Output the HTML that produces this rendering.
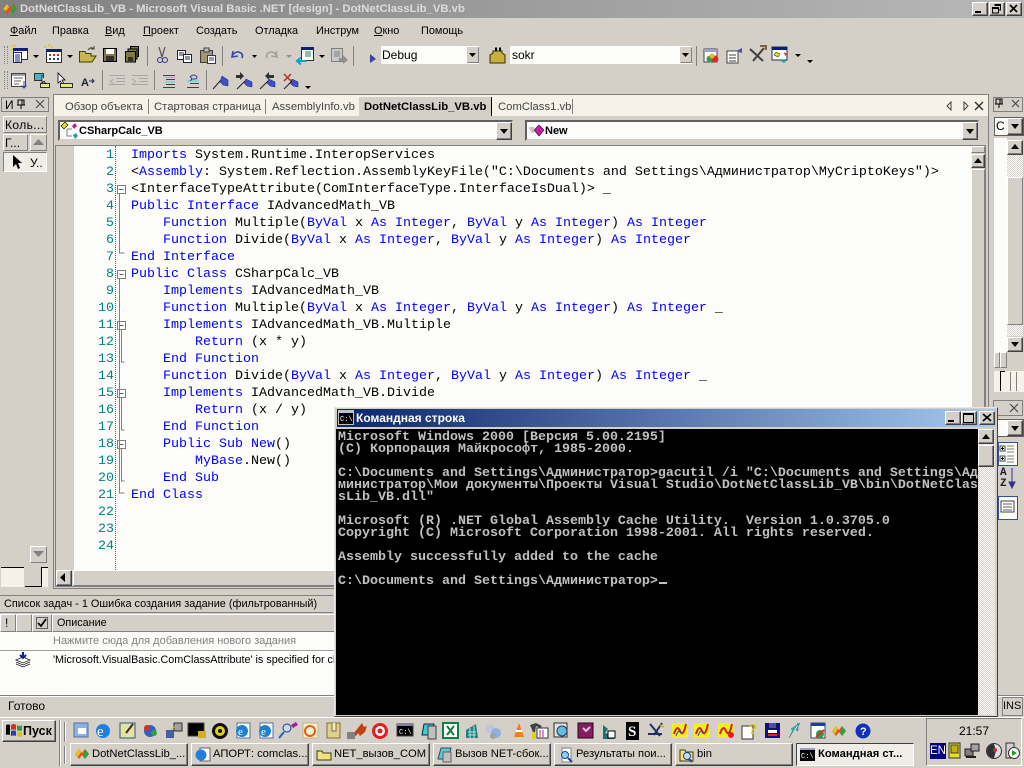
<!DOCTYPE html>
<html><head><meta charset="utf-8"><style>
html,body{margin:0;padding:0}
body{width:1024px;height:768px;overflow:hidden;position:relative;background:#d4d0c8;font:11.5px "Liberation Sans","Noto Sans CJK SC",sans-serif;color:#000}
div,span.a,svg{position:absolute}
.t{white-space:nowrap;line-height:14px}
.b{background:#d4d0c8;border:1px solid;border-color:#fff #404040 #404040 #fff;box-sizing:border-box;box-shadow:inset -1px -1px 0 #808080}
.f{background:#d4d0c8;border:1px solid;border-color:#808080 #fff #fff #808080;box-sizing:border-box}
.m{white-space:pre;font:13.33px/17px "Liberation Mono",monospace;left:131px;color:#000}
.m b{font-weight:normal;color:#00f}
.n{font:13.33px/17px "Liberation Mono",monospace;color:#008080;left:90px;width:24px;text-align:right}
.c{white-space:pre;font:bold 13.33px/12px "Liberation Mono",monospace;color:#c0c0c0;left:2px}
.tb{top:743px;height:23px;width:118px;background:#d4d0c8;border:1px solid;border-color:#fff #404040 #404040 #fff;box-sizing:border-box;box-shadow:inset -1px -1px 0 #808080;line-height:20px;padding-left:21px;font-size:11.2px;white-space:nowrap;overflow:hidden}
.mn{top:24px;line-height:14px;font-size:10.9px;white-space:nowrap}
.tab{top:100px;line-height:14px;color:#444;white-space:nowrap;font-size:11.3px}
</style></head><body>

<!-- title bar -->
<div style="left:0;top:0;width:1024px;height:18px;background:linear-gradient(90deg,#808080,#b8b8b8)"></div>
<svg style="left:2px;top:2px" width="16" height="14"><path d="M1 7L5 2L8 6L11 2L15 7L11 12L8 8L5 12Z" fill="#e05020"/><path d="M1 7L5 2L7 5L4 9Z" fill="#e8c020"/><path d="M11 2L15 7L11 12L9 9Z" fill="#30a040"/></svg>
<div class="t" style="left:20px;top:2px;color:#dcdcdc;font:bold 11.3px/14px 'Liberation Sans',sans-serif">DotNetClassLib_VB - Microsoft Visual Basic .NET [design] - DotNetClassLib_VB.vb</div>
<div class="b" style="left:972px;top:2px;width:16px;height:14px"></div><div style="left:975px;top:11px;width:6px;height:2px;background:#000"></div>
<div class="b" style="left:989px;top:2px;width:16px;height:14px"></div><svg style="left:991px;top:3px" width="12" height="12"><path d="M3.5 1.5H9.5V7H7.5M1.5 4.5H7.5V10H1.5ZM1.5 5.5H7.5M3.5 2.5H9.5" fill="none" stroke="#000"/></svg>
<div class="b" style="left:1006px;top:2px;width:16px;height:14px"></div><svg style="left:1008px;top:4px" width="12" height="10"><path d="M2 1L9 8M9 1L2 8" stroke="#000" stroke-width="1.7"/></svg>

<!-- menu -->
<div class="mn" style="left:10px"><u>Ф</u>айл</div>
<div class="mn" style="left:52px">Правка</div>
<div class="mn" style="left:105px"><u>В</u>ид</div>
<div class="mn" style="left:143px"><u>П</u>роект</div>
<div class="mn" style="left:196px">Создать</div>
<div class="mn" style="left:255px">Отладка</div>
<div class="mn" style="left:316px">Инструм</div>
<div class="mn" style="left:374px"><u>О</u>кно</div>
<div class="mn" style="left:421px">Помощь</div>

<!-- toolbar 1 -->
<div style="left:4px;top:46px;width:2px;height:18px;border-left:1px dotted #808080;border-right:1px dotted #808080"></div>
<svg style="left:0;top:42px" width="830" height="26">
<rect x="13.500" y="6.500" width="14" height="11" fill="#fff" stroke="#303030"/><rect x="13" y="6" width="15" height="3" fill="#102070"/>
<rect x="13.500" y="10.500" width="8" height="10" fill="#fff" stroke="#102080"/><path d="M15 13h5M15 15h5M15 17h5M15 19h5" stroke="#102080"/>
<path d="M11 3l2 2M15 2v3M11 8l2-1" stroke="#e0c000"/>
<rect x="46.500" y="7.500" width="15" height="13" fill="#fff" stroke="#303030"/><rect x="46" y="7" width="16" height="3" fill="#102070"/>
<path d="M49 13h2M53 13h2M57 13h2" stroke="#c03030" stroke-width="2"/><path d="M49 17h2M53 17h2M57 17h2" stroke="#2040a0" stroke-width="2"/>
<path d="M44 4l2 2M49 2v3M53 4l-2 2" stroke="#e0c000"/>
<path d="M33 13h6l-3 3zM67 13h6l-3 3z" fill="#000"/>
<path d="M79.500 20V9.500H85l1 2H91V14H96L92 20Z" fill="#c8b850" stroke="#404000"/><path d="M88 8q3-4 6-1M94 4v3h-3" stroke="#404040" fill="none"/>
<rect x="103.500" y="6.500" width="13" height="13" fill="#807a40" stroke="#000"/><rect x="106" y="7" width="8" height="5" fill="#fff"/><rect x="106" y="14" width="8" height="5" fill="#303030"/>
<rect x="130.500" y="4.500" width="8" height="10" fill="#807a40" stroke="#000"/><rect x="128" y="7" width="9" height="10" fill="#807a40" stroke="#000"/><rect x="125.500" y="9.500" width="10" height="10.500" fill="#807a40" stroke="#000"/><rect x="128" y="15" width="5" height="4" fill="#303030"/>
<path d="M159 5l3 10M165 5l-3 10" stroke="#505050" stroke-width="1.200" fill="none"/><circle cx="160" cy="18" r="2.500" fill="none" stroke="#303090"/><circle cx="165" cy="18" r="2.500" fill="none" stroke="#303090"/>
<path d="M177.500 8.500h8v9h-8z" fill="#fff" stroke="#202040"/><path d="M179 11h5M179 13h5" stroke="#202040"/><path d="M183.500 12.500h8v8h-8z" fill="#fff" stroke="#202040"/><path d="M185 15h5M185 17h5" stroke="#202040"/>
<rect x="200.500" y="8.500" width="12" height="12" fill="#a09870" stroke="#404040"/><rect x="204" y="6" width="5" height="4" fill="#c0c0c0" stroke="#404040"/><rect x="207.500" y="13.500" width="8" height="8" fill="#fff" stroke="#303080"/><path d="M209 16h5M209 18h5" stroke="#303080"/>
<path d="M233 9l-1 6 6-1M232 14q5-7 10-2q1 2 0 4" fill="none" stroke="#3a48a8" stroke-width="1.600"/><path d="M252 13h5l-2.500 3z" fill="#000"/>
<path d="M276 9l1 6-6-1M277 14q-5-7-10-2q-1 2 0 4" fill="none" stroke="#a0a0a0" stroke-width="1.600"/><path d="M286 13h6l-3 3z" fill="#909090"/>
<rect x="301.500" y="5.500" width="12" height="13" fill="#fff" stroke="#303030"/><rect x="301" y="5" width="13" height="3" fill="#102070"/><path d="M305 10h6M305 12h6M305 14h6" stroke="#208040"/><path d="M298 19h8M301 15.500l-4 3.500 4 3.500" stroke="#00a8c8" stroke-width="2" fill="none"/>
<path d="M319 13h6l-3 3z" fill="#000"/>
<rect x="331.500" y="6.500" width="11" height="13" fill="#c8c8c8" stroke="#808080"/><path d="M334 10h6M334 12h6M334 14h6" stroke="#808080"/><path d="M339 16h4v-3l5 5-5 4v-3h-4z" fill="#909090"/>
<path d="M370 12l6 5-6 4z" fill="#4040a0"/>
<path d="M490 21V13L493 11V9h9v2l3 2v8z" fill="#c8b040" stroke="#303000"/><path d="M495 7h2M499 7h2" stroke="#000" stroke-width="3"/>
<rect x="704" y="7" width="13" height="13" fill="#fff" stroke="#404060"/><rect x="704" y="7" width="13" height="3" fill="#a0a0c0"/><circle cx="710" cy="17" r="3.5" fill="#30a040"/><circle cx="715" cy="17" r="3.5" fill="#d03030"/><circle cx="712" cy="14" r="2.5" fill="#e0c020"/>
<rect x="727" y="9" width="11" height="12" fill="#fff" stroke="#404040"/><path d="M729 13h7M729 16h7M729 19h7" stroke="#404040"/><path d="M736 9l6-3v5z" fill="#5050a0"/>
<path d="M750 7l13 12M764 6l-11 13" stroke="#404040" stroke-width="2"/><path d="M760 4h6v4" stroke="#806040" stroke-width="2" fill="none"/>
<rect x="772" y="5" width="15" height="13" fill="#fff" stroke="#303030"/><rect x="772" y="5" width="15" height="3" fill="#002080"/><path d="M776 10l4 2-2 3-4-2z" fill="#e0e020" stroke="#000" stroke-width=".5"/><path d="M784 10l3 2-2 2z" fill="#c02080"/><path d="M783 17l3 2-2 2-3-2z" fill="#20a0b0"/>
<path d="M795 12h6l-3 3zM807 18h6l-3 3z" fill="#000"/>
</svg>
<div style="left:147px;top:46px;width:1px;height:20px;background:#808080"></div>
<div style="left:222px;top:46px;width:1px;height:20px;background:#808080"></div>
<div style="left:353px;top:46px;width:1px;height:20px;background:#808080"></div>
<div style="left:696px;top:46px;width:1px;height:20px;background:#808080"></div>
<div style="left:381px;top:46px;width:98px;height:18px;background:#fcfcfa"></div>
<div class="t" style="left:382px;top:48px;font-size:12px">Debug</div>
<div class="b" style="left:467px;top:47px;width:12px;height:16px;border-color:#d4d0c8 #808080 #808080 #d4d0c8;box-shadow:none"></div>
<svg style="left:469px;top:53px" width="8" height="5"><path d="M0 0h7L3.500 4z"/></svg>
<div style="left:510px;top:46px;width:182px;height:18px;background:#fcfcfa"></div>
<div class="t" style="left:512px;top:48px;font-size:12px">sokr</div>
<div class="b" style="left:680px;top:47px;width:12px;height:16px;border-color:#d4d0c8 #808080 #808080 #d4d0c8;box-shadow:none"></div>
<svg style="left:682px;top:53px" width="8" height="5"><path d="M0 0h7L3.500 4z"/></svg>

<!-- toolbar 2 -->
<div style="left:4px;top:71px;width:2px;height:18px;border-left:1px dotted #808080;border-right:1px dotted #808080"></div>
<svg style="left:0;top:66px" width="320" height="28">
<rect x="11.500" y="7.500" width="14" height="13" fill="#fff" stroke="#404040"/><rect x="12" y="8" width="13" height="2" fill="#a0a0a0"/><path d="M14 12h9M14 15h7M14 18h5" stroke="#606060"/><path d="M24 15v7m-2.500-2.500l2.500 2.500 2.500-2.500" stroke="#3040b0" fill="none"/>
<rect x="34.500" y="7.500" width="9" height="7" fill="#40b8c8" stroke="#303030"/><rect x="40.500" y="17.500" width="9" height="4" fill="#e8e880" stroke="#303030"/><path d="M42 9v8l2-2 2 3" fill="#fff" stroke="#000" stroke-width=".8"/>
<path d="M58 7v10l2.500-2 2 4 1.500-1-2-4h3z" fill="#fff" stroke="#000" stroke-width=".8"/><rect x="60.500" y="17.500" width="12" height="4" fill="#e8e880" stroke="#303030"/>
<text x="81" y="20" font-family="Liberation Sans" font-size="11" font-weight="bold" fill="#202040">A</text><path d="M89 15h5m-2-2l2 2-2 2" stroke="#202060" fill="none"/>
<path d="M109 9.500h16M116 12.500h9M116 15.500h9M109 18.500h16" stroke="#a8a8a8"/><path d="M114 13l-4 2.500 4 2.500" stroke="#a8a8a8" fill="none"/>
<path d="M132 9.500h16M139 12.500h9M139 15.500h9M132 18.500h16" stroke="#a8a8a8"/><path d="M132 13l4 2.500-4 2.500" stroke="#a8a8a8" fill="none"/>
<path d="M163 9.500h12M163 21.500h12M166 13.500h9M166 18.500h9" stroke="#404040"/><path d="M165 11.500h10M165 16h10" stroke="#40d8d8"/>
<path d="M187 21.500h12M190 17.500h9" stroke="#404040"/><path d="M187 15h12" stroke="#40d8d8"/><path d="M190 11q4-4 7 0q0 2-2 2h-4m-1-3l2 3-2 2" stroke="#3040a0" fill="none"/>
<g fill="#4050c8" stroke="#102060" stroke-width=".5"><path d="M222 10l6 4v6l-5-1-3-3z"/><path d="M246 13l6 3v5l-5-1-3-3z"/><path d="M269 13l6 3v5l-5-1-3-3z"/><path d="M292 13l6 3v5l-5-1-3-3z"/></g>
<path d="M213 23l8-9M237 23l8-8M260 23l8-8M284 23l8-8" stroke="#202020"/>
<path d="M236 9h4V6l4 4-4 4v-2h-4zM265 10l4-4v3h5v3h-5v2z" fill="#303030"/><path d="M284 8l7 7M291 8l-7 7" stroke="#b03030" stroke-width="1.500"/>
<path d="M305 20h6l-3 3z" fill="#000"/>
</svg>
<div style="left:102px;top:70px;width:1px;height:20px;background:#808080"></div>
<div style="left:154px;top:70px;width:1px;height:20px;background:#808080"></div>
<div style="left:206px;top:70px;width:1px;height:20px;background:#808080"></div>

<!-- left panel -->
<div class="b" style="left:1px;top:97px;width:48px;height:15px;box-shadow:none;border-color:#808080"></div>
<div class="t" style="left:5px;top:98px;font-size:12px">И</div>
<svg style="left:16px;top:99px" width="30" height="11"><path d="M2 1h6v5H2zM1 6h8M5 6v4M6 1v5" stroke="#000" fill="none"/><path d="M20 1l8 8M28 1l-8 8" stroke="#404040"/></svg>
<div class="b" style="left:3px;top:116px;width:44px;height:17px;box-shadow:none;border-color:#fff #808080 #808080 #fff"></div>
<div class="t" style="left:5px;top:118px;font-size:12px;letter-spacing:.4px">Коль...</div>
<div class="b" style="left:3px;top:134px;width:25px;height:17px;box-shadow:none;border-color:#fff #808080 #808080 #fff"></div>
<div class="t" style="left:5px;top:136px;font-size:12px">Г...</div>
<div class="b" style="left:30px;top:134px;width:17px;height:17px;box-shadow:none;border-color:#fff #808080 #808080 #fff"></div>
<svg style="left:33px;top:139px" width="12" height="7"><path d="M5.500 0L11 6H0z" fill="#808080"/></svg>
<div style="left:3px;top:152px;width:44px;height:20px;background:#efedE6;border:1px solid;border-color:#808080 #fff #fff #808080;box-sizing:border-box"></div>
<svg style="left:12px;top:154px" width="12" height="16"><path d="M1 1v12l3-3 2 5 2-1-2-5h4z"/></svg>
<div class="t" style="left:30px;top:156px;font-size:12px">У..</div>
<div class="b" style="left:30px;top:546px;width:17px;height:17px;box-shadow:none;border-color:#fff #808080 #808080 #fff"></div>
<svg style="left:33px;top:551px" width="12" height="7"><path d="M0 0h11L5.500 6z" fill="#808080"/></svg>
<div style="left:1px;top:567px;width:23px;height:20px;background:#f4f0ea;border-top:1px solid #000;box-sizing:border-box"></div>
<div style="left:25px;top:567px;width:16px;height:20px;border-left:0;border-bottom:1px solid #000;box-sizing:border-box"></div>
<div style="left:41px;top:567px;width:7px;height:20px;background:#f4f0ea;border-top:1px solid #000;border-left:1px solid #000;box-sizing:border-box"></div>

<!-- document area -->
<div style="left:53px;top:94px;width:936px;height:495px;background:#d4d0c8;border:1px solid #808080;box-sizing:border-box"></div>
<div style="left:54px;top:95px;width:934px;height:21px;background:#f6f2ea"></div>
<div class="tab" style="left:65px">Обзор объекта</div>
<div style="left:148px;top:99px;width:1px;height:15px;background:#808080"></div>
<div class="tab" style="left:154px">Стартовая страница</div>
<div style="left:265px;top:99px;width:1px;height:15px;background:#808080"></div>
<div class="tab" style="left:272px">AssemblyInfo.vb</div>
<div style="left:359px;top:97px;width:133px;height:19px;background:#d4d0c8;border-right:1px solid #000;box-sizing:border-box"></div>
<div class="tab" style="left:364px;color:#000;font-weight:bold">DotNetClassLib_VB.vb</div>
<div class="tab" style="left:498px">ComClass1.vb</div>
<div style="left:572px;top:99px;width:1px;height:15px;background:#808080"></div>
<svg style="left:944px;top:100px" width="40" height="13"><path d="M7 2L3 6l4 4zM20 2l4 4-4 4z" fill="none" stroke="#404040"/><path d="M31 2l8 8M39 2l-8 8" stroke="#303030" stroke-width="1.400"/></svg>

<!-- combos -->
<div style="left:58px;top:120px;width:455px;height:21px;background:#fcfcfa;border:2px solid;border-color:#606060 #d4d0c8 #d4d0c8 #606060;box-sizing:border-box"></div>
<svg style="left:60px;top:121px" width="20" height="20"><path d="M1 5l4-4 3 3-4 4z" fill="#e8e010" stroke="#000" stroke-width=".6"/><path d="M12 5l3-3 2 3-3 3z" fill="#c02080"/><path d="M13 14l3-2 2 3-3 3z" fill="#20a0b0"/><path d="M7 8v7h5M7 8h5" stroke="#808080" fill="none"/></svg>
<div class="t" style="left:79px;top:124px;font:bold 11px/14px 'Liberation Sans',sans-serif">CSharpCalc_VB</div>
<div class="b" style="left:496px;top:122px;width:16px;height:18px"></div>
<svg style="left:500px;top:129px" width="9" height="6"><path d="M0 0h8L4 5z"/></svg>
<div style="left:525px;top:120px;width:454px;height:21px;background:#fcfcfa;border:2px solid;border-color:#606060 #d4d0c8 #d4d0c8 #606060;box-sizing:border-box"></div>
<svg style="left:528px;top:123px" width="18" height="16"><path d="M1 5h5M2 7h4M3 9h3" stroke="#909090"/><path d="M11 2l5 5-5 6-5-6z" fill="#c020a0" stroke="#400040" stroke-width=".6"/></svg>
<div class="t" style="left:545px;top:124px;font:bold 11px/14px 'Liberation Sans',sans-serif">New</div>
<div class="b" style="left:962px;top:122px;width:16px;height:18px"></div>
<svg style="left:966px;top:129px" width="9" height="6"><path d="M0 0h8L4 5z"/></svg>

<!-- editor -->
<div style="left:55px;top:145px;width:931px;height:442px;border:1px solid #808080;box-sizing:border-box;background:#d4d0c8"></div>
<div style="left:74px;top:146px;width:897px;height:424px;background:#fcfcfa"></div>
<div style="left:115px;top:146px;width:0;height:424px;border-left:1px dotted #008080"></div>
<div class="n" style="top:147px">1</div><div class="n" style="top:164px">2</div><div class="n" style="top:181px">3</div><div class="n" style="top:198px">4</div><div class="n" style="top:215px">5</div><div class="n" style="top:232px">6</div><div class="n" style="top:249px">7</div><div class="n" style="top:266px">8</div><div class="n" style="top:283px">9</div><div class="n" style="top:300px">10</div><div class="n" style="top:317px">11</div><div class="n" style="top:334px">12</div><div class="n" style="top:351px">13</div><div class="n" style="top:368px">14</div><div class="n" style="top:385px">15</div><div class="n" style="top:402px">16</div><div class="n" style="top:419px">17</div><div class="n" style="top:436px">18</div><div class="n" style="top:453px">19</div><div class="n" style="top:470px">20</div><div class="n" style="top:487px">21</div><div class="n" style="top:504px">22</div><div class="n" style="top:521px">23</div><div class="n" style="top:538px">24</div>
<svg style="left:116px;top:147px" width="14" height="360"><g fill="#fff" stroke="#808080"><rect x="1.500" y="38.500" width="8" height="8"/><rect x="1.500" y="123.500" width="8" height="8"/><rect x="1.500" y="174.500" width="8" height="8"/><rect x="1.500" y="242.500" width="8" height="8"/><rect x="1.500" y="293.500" width="8" height="8"/></g>
<path d="M3.500 47v59h5M3.500 132V346h5M5.500 183v32h3M5.500 251v32h3M5.500 302v32h3M3.500 42.500h-1" fill="none" stroke="#808080" stroke-width="1"/><path d="M3.500 42.500h4M3.500 127.500h4M3.500 178.500h4M3.500 246.500h4M3.500 297.500h4" stroke="#606060"/></svg>
<div class="m" style="top:147px"><b>Imports</b> System.Runtime.InteropServices</div>
<div class="m" style="top:164px">&lt;<b>Assembly</b>: System.Reflection.AssemblyKeyFile("C:\Documents and Settings\Администратор\MyCriptoKeys")&gt;</div>
<div class="m" style="top:181px">&lt;InterfaceTypeAttribute(ComInterfaceType.InterfaceIsDual)&gt; _</div>
<div class="m" style="top:198px"><b>Public Interface</b> IAdvancedMath_VB</div>
<div class="m" style="top:215px">    <b>Function</b> Multiple(<b>ByVal</b> x <b>As Integer</b>, <b>ByVal</b> y <b>As Integer</b>) <b>As Integer</b></div>
<div class="m" style="top:232px">    <b>Function</b> Divide(<b>ByVal</b> x <b>As Integer</b>, <b>ByVal</b> y <b>As Integer</b>) <b>As Integer</b></div>
<div class="m" style="top:249px"><b>End Interface</b></div>
<div class="m" style="top:266px"><b>Public Class</b> CSharpCalc_VB</div>
<div class="m" style="top:283px">    <b>Implements</b> IAdvancedMath_VB</div>
<div class="m" style="top:300px">    <b>Function</b> Multiple(<b>ByVal</b> x <b>As Integer</b>, <b>ByVal</b> y <b>As Integer</b>) <b>As Integer</b> _</div>
<div class="m" style="top:317px">    <b>Implements</b> IAdvancedMath_VB.Multiple</div>
<div class="m" style="top:334px">        <b>Return</b> (x * y)</div>
<div class="m" style="top:351px">    <b>End Function</b></div>
<div class="m" style="top:368px">    <b>Function</b> Divide(<b>ByVal</b> x <b>As Integer</b>, <b>ByVal</b> y <b>As Integer</b>) <b>As Integer</b> _</div>
<div class="m" style="top:385px">    <b>Implements</b> IAdvancedMath_VB.Divide</div>
<div class="m" style="top:402px">        <b>Return</b> (x / y)</div>
<div class="m" style="top:419px">    <b>End Function</b></div>
<div class="m" style="top:436px">    <b>Public Sub New</b>()</div>
<div class="m" style="top:453px">        <b>MyBase</b>.New()</div>
<div class="m" style="top:470px">    <b>End Sub</b></div>
<div class="m" style="top:487px"><b>End Class</b></div>

<!-- editor scrollbars -->
<div class="b" style="left:971px;top:146px;width:14px;height:7px;box-shadow:none;border-color:#fff #808080 #808080 #fff"></div>
<div class="b" style="left:971px;top:154px;width:14px;height:14px"></div>
<svg style="left:974px;top:158px" width="9" height="6"><path d="M4 0l4 5H0z"/></svg>
<div class="b" style="left:971px;top:169px;width:14px;height:240px;box-shadow:none;border-color:#fff #808080 #808080 #fff"></div>
<div class="b" style="left:56px;top:570px;width:16px;height:16px"></div>
<svg style="left:60px;top:573px" width="7" height="10"><path d="M5 0v9L0 4.500z"/></svg>
<div class="b" style="left:73px;top:570px;width:270px;height:16px;box-shadow:none;border-color:#fff #808080 #808080 #fff"></div>

<!-- right panel -->
<div class="b" style="left:993px;top:97px;width:30px;height:15px;box-shadow:none;border-color:#808080"></div>
<svg style="left:995px;top:98px" width="27" height="12"><path d="M1 1h6v5H1zM0 6h8M4 6v4M5 1v5" stroke="#000" fill="none"/><path d="M17 2l7 7M24 2l-7 7" stroke="#404040"/></svg>
<div style="left:994px;top:117px;width:30px;height:19px;background:#fcfcfa;border:1px solid #606060;box-sizing:border-box"></div>
<div class="t" style="left:996px;top:119px;font-size:12px">C</div>
<div class="b" style="left:1007px;top:118px;width:16px;height:17px"></div>
<svg style="left:1011px;top:124px" width="9" height="6"><path d="M0 0h8L4 5z"/></svg>
<div style="left:994px;top:138px;width:13px;height:214px;background:#fcfcfa"></div>
<div class="b" style="left:1007px;top:140px;width:16px;height:15px"></div>
<svg style="left:1011px;top:144px" width="9" height="6"><path d="M4 0l4 5H0z"/></svg>
<div style="left:1007px;top:155px;width:16px;height:22px;background:repeating-conic-gradient(#fff 0 25%,#d4d0c8 0 50%) 0 0/2px 2px"></div>
<div class="b" style="left:1007px;top:177px;width:16px;height:148px;box-shadow:none;border-color:#fff #808080 #808080 #fff"></div>
<div style="left:1007px;top:325px;width:16px;height:11px;background:repeating-conic-gradient(#fff 0 25%,#d4d0c8 0 50%) 0 0/2px 2px"></div>
<div class="b" style="left:1007px;top:337px;width:16px;height:15px"></div>
<svg style="left:1011px;top:342px" width="9" height="6"><path d="M0 0h8L4 5z"/></svg>
<div class="b" style="left:994px;top:352px;width:6px;height:16px;box-shadow:none;border-color:#fff #808080 #808080 #fff"></div>
<div class="b" style="left:1000px;top:352px;width:7px;height:16px;box-shadow:none;border-color:#fff #808080 #808080 #fff"></div>
<div style="left:994px;top:371px;width:30px;height:21px;background:#f6f2ea"></div>
<div style="left:1000px;top:371px;width:5px;height:20px;border-left:1px solid #000;border-top:1px solid #000;box-sizing:border-box"></div>
<div style="left:1010px;top:372px;width:1px;height:19px;background:#808080"></div>
<div style="left:1016px;top:372px;width:1px;height:19px;background:#808080"></div>
<div class="b" style="left:993px;top:400px;width:30px;height:16px;box-shadow:none;border-color:#808080"></div>
<svg style="left:1008px;top:403px" width="12" height="11"><path d="M2 1l8 8M10 1l-8 8" stroke="#404040"/></svg>
<div style="left:997px;top:419px;width:27px;height:18px;background:#fcfcfa;border:1px solid #606060;box-sizing:border-box"></div>
<div class="b" style="left:1007px;top:420px;width:16px;height:16px"></div>
<svg style="left:1011px;top:426px" width="9" height="6"><path d="M0 0h8L4 5z"/></svg>
<div style="left:998px;top:442px;width:20px;height:24px;background:#fcfcfa;border:1px solid #3050a0;box-sizing:border-box"></div>
<svg style="left:999px;top:444px" width="18" height="22"><path d="M1 2h5v5H1zM1 12h5v5H1z" fill="#fff" stroke="#404040"/><path d="M2 4.500h3M2 14.500h3M3.500 3v3M3.500 13v3" stroke="#000"/><path d="M8 2h7M8 5h7M8 8h7M8 12h7M8 15h7M8 18h7" stroke="#808080"/></svg>
<div class="t" style="left:1000px;top:468px;font:bold 11px/11px 'Liberation Mono',monospace;color:#202020">A<br>Z</div>
<svg style="left:1006px;top:466px" width="14" height="26"><path d="M6 2v18M3 16l3 6 3-6z" fill="#303090" stroke="#303090"/></svg>
<div style="left:998px;top:496px;width:20px;height:24px;background:#fcfcfa;border:1px solid #3050a0;box-sizing:border-box"></div>
<svg style="left:1000px;top:500px" width="16" height="14"><rect x="1" y="1" width="13" height="11" fill="#fff" stroke="#404040"/><path d="M3 4h9M3 7h9M3 10h9" stroke="#606060"/></svg>

<!-- task list -->
<div style="left:0;top:595px;width:333px;height:18px;border-top:1px solid #808080;border-bottom:1px solid #808080;box-sizing:border-box"></div>
<div class="t" style="left:4px;top:597px;font-size:10.900px">Список задач - 1 Ошибка создания задание (фильтрованный)</div>
<div style="left:0;top:614px;width:334px;height:18px;background:#d4d0c8;border-top:1px solid #808080;box-sizing:border-box"></div>
<div class="b" style="left:0;top:614px;width:16px;height:18px;box-shadow:none;border-color:#fff #808080 #808080 #fff"></div>
<div class="t" style="left:5px;top:616px;font-size:12px">!</div>
<div class="b" style="left:16px;top:614px;width:16px;height:18px;box-shadow:none;border-color:#fff #808080 #808080 #fff"></div>
<div class="b" style="left:32px;top:614px;width:20px;height:18px;box-shadow:none;border-color:#fff #808080 #808080 #fff"></div>
<div class="f" style="left:36px;top:617px;width:12px;height:12px;border-color:#606060"></div>
<svg style="left:37px;top:618px" width="10" height="10"><path d="M1 5l3 3 5-7" stroke="#000" stroke-width="1.800" fill="none"/></svg>
<div class="b" style="left:52px;top:614px;width:283px;height:18px;box-shadow:none;border-color:#fff #808080 #808080 #fff"></div>
<div class="t" style="left:57px;top:616px;font-size:10.800px">Описание</div>
<div style="left:0;top:632px;width:334px;height:63px;background:#fcfcfa"></div>
<div style="left:0;top:650px;width:334px;height:1px;background:#a0a0a0"></div>
<div class="t" style="left:53px;top:634px;color:#808080;font-size:11px">Нажмите сюда для добавления нового задания</div>
<div class="t" style="left:53px;top:653px;font-size:10.800px;width:281px;overflow:hidden">'Microsoft.VisualBasic.ComClassAttribute' is specified for class</div>
<svg style="left:14px;top:651px" width="18" height="18"><path d="M2 9l7-3 7 3-7 3zM2 11l7 3 7-3M2 13l7 3 7-3" fill="#fff" stroke="#202020" stroke-width=".8"/><path d="M9 1v6M6 4l3 3 3-3" stroke="#102090" stroke-width="2" fill="none"/></svg>
<div style="left:0;top:695px;width:1024px;height:1px;background:#808080"></div>
<div style="left:0;top:696px;width:1024px;height:1px;background:#fff"></div>
<div class="t" style="left:8px;top:699px;font-size:12px">Готово</div>
<div style="left:1002px;top:697px;width:21px;height:19px;border:1px solid #808080;box-sizing:border-box"></div>
<div class="t" style="left:1003px;top:699px;font-size:11px">INS</div>

<!-- console window -->
<div style="left:334px;top:407px;width:664px;height:310px;background:#d4d0c8;border:1px solid;border-color:#e8e8e8 #404040 #404040 #e8e8e8;box-sizing:border-box"></div>
<div style="left:337px;top:409px;width:659px;height:18px;background:linear-gradient(90deg,#0a246a,#a6caf0)"></div>
<svg style="left:338px;top:410px" width="16" height="15"><rect width="16" height="15" fill="#c0c0c0"/><rect x="1" y="3" width="14" height="11" fill="#000"/><text x="2" y="11" font-family="Liberation Mono" font-size="7" fill="#fff">C:\</text></svg>
<div class="t" style="left:356px;top:411px;color:#fff;font:bold 12px/14px 'Liberation Sans',sans-serif">Командная строка</div>
<div class="b" style="left:945px;top:411px;width:16px;height:14px"></div><div style="left:948px;top:420px;width:6px;height:2px;background:#000"></div>
<div class="b" style="left:961px;top:411px;width:16px;height:14px"></div><div style="left:963px;top:413px;width:11px;height:10px;border:1px solid #000;border-top-width:2px;box-sizing:border-box"></div>
<div class="b" style="left:979px;top:411px;width:16px;height:14px"></div><svg style="left:981px;top:413px" width="12" height="10"><path d="M2 1l8 7M10 1l-8 7" stroke="#000" stroke-width="1.700"/></svg>
<div style="left:336px;top:429px;width:642px;height:286px;background:#000;overflow:hidden">
<div class="c" style="top:3px">Microsoft Windows 2000 [Версия 5.00.2195]
(C) Корпорация Майкрософт, 1985-2000.

C:\Documents and Settings\Администратор&gt;gacutil /i "C:\Documents and Settings\Ад
министратор\Мои документы\Проекты Visual Studio\DotNetClassLib_VB\bin\DotNetClas
sLib_VB.dll"

Microsoft (R) .NET Global Assembly Cache Utility.  Version 1.0.3705.0
Copyright (C) Microsoft Corporation 1998-2001. All rights reserved.

Assembly successfully added to the cache

C:\Documents and Settings\Администратор&gt;</div>
<div style="left:323px;top:153px;width:8px;height:2px;background:#c0c0c0"></div>
</div>
<div style="left:978px;top:429px;width:17px;height:286px;background:repeating-conic-gradient(#fff 0 25%,#d4d0c8 0 50%) 0 0/2px 2px"></div>
<div class="b" style="left:978px;top:429px;width:16px;height:15px"></div>
<svg style="left:982px;top:434px" width="9" height="6"><path d="M4 0l4 5H0z"/></svg>
<div class="b" style="left:978px;top:445px;width:16px;height:22px"></div>

<!-- taskbar -->
<div style="left:0;top:717px;width:1024px;height:1px;background:#fff"></div>
<div class="b" style="left:2px;top:720px;width:54px;height:22px"></div>
<svg style="left:5px;top:722px" width="18" height="17"><path d="M1 3q3-1 4 0v10q-2-1-4 0z" fill="#000"/><path d="M6 3q3-2 5 0v5q-2-1-5 0z" fill="#d03020"/><path d="M12 3q3 2 5 0v5q-2 2-5 0z" fill="#30a030"/><path d="M6 9q3-1 5 0v5q-2-1-5 0z" fill="#2040c0"/><path d="M12 9q3 2 5 0v5q-2 2-5 0z" fill="#e0c020"/></svg>
<div class="t" style="left:23px;top:724px;font:bold 12.500px/14px 'Liberation Sans',sans-serif">Пуск</div>
<div style="left:59px;top:720px;width:1px;height:46px;background:#808080;border-right:1px solid #fff"></div>
<div style="left:64px;top:722px;width:1px;height:20px;background:#808080;border-right:1px solid #fff"></div>
<div style="left:64px;top:746px;width:1px;height:18px;background:#808080;border-right:1px solid #fff"></div>
<svg style="left:70px;top:720px" width="810" height="22">
<rect x="4" y="3" width="14" height="14" fill="#90b0e0" stroke="#5070a0"/><path d="M8 8h8v6H8z" fill="#fff"/>
<circle cx="33" cy="11" r="7" fill="#2080e0"/><text x="27" y="16" font-family="Liberation Serif" font-size="15" fill="#fff">e</text>
<rect x="50" y="3" width="15" height="15" fill="#e8e0a0" stroke="#206080"/><path d="M56 13l7-9" stroke="#303030" stroke-width="2"/>
<circle cx="80" cy="11" r="6" fill="#3060c0"/><circle cx="77" cy="8" r="3" fill="#d03030"/><circle cx="84" cy="13" r="3" fill="#30a040"/>
<rect x="96" y="10" width="8" height="8" fill="#4060a0"/><rect x="104" y="3" width="8" height="8" fill="#a0a0a0" stroke="#303030"/><path d="M100 10l6-4" stroke="#d0c020"/>
<rect x="118" y="3" width="16" height="13" fill="#000" stroke="#404040"/><rect x="128" y="11" width="8" height="7" fill="#d0b020"/>
<circle cx="150" cy="11" r="8" fill="#101010"/><circle cx="150" cy="11" r="5" fill="#e0d020"/><circle cx="150" cy="11" r="2" fill="#101010"/>
<rect x="167" y="3" width="13" height="15" fill="#fff" stroke="#5070a0"/><circle cx="172" cy="11" r="6" fill="#2080d0"/><text x="168" y="15" font-family="Liberation Serif" font-size="11" fill="#fff">e</text>
<rect x="190" y="3" width="13" height="15" fill="#fff" stroke="#5070a0"/><circle cx="195" cy="11" r="6" fill="#2080d0"/><text x="191" y="15" font-family="Liberation Serif" font-size="11" fill="#fff">e</text>
<circle cx="217" cy="8" r="4" fill="#c0e0f0" stroke="#303090"/><path d="M214 12l-5 6" stroke="#2060c0" stroke-width="2"/><path d="M221 5l5-3 2 3-5 3z" fill="#a020a0"/>
<rect x="233" y="3" width="15" height="15" fill="#f8f0d0" stroke="#c0b090"/><circle cx="240" cy="11" r="5" fill="none" stroke="#e06010" stroke-width="2"/>
<path d="M257 3h13v15h-13z" fill="#e0d090" stroke="#807030"/><path d="M262 3v8h4V3" stroke="#807030" fill="#f0e8c0"/>
<path d="M283 14l5-6 4-5 2 4 3-1-2 6-5 4-2-3-2 3z" fill="#c04010"/><rect x="277" y="12" width="8" height="7" fill="#808080"/>
<circle cx="310" cy="11" r="8" fill="#e02020"/><circle cx="310" cy="11" r="5" fill="#fff"/><circle cx="310" cy="11" r="2.500" fill="#e02020"/>
<rect x="327" y="4" width="16" height="12" fill="#000" stroke="#404040"/><rect x="327" y="4" width="16" height="2" fill="#8080a0"/><text x="329" y="14" font-family="Liberation Mono" font-size="7" fill="#fff">C:\</text>
<path d="M354 4h10l-3 11h-9z" fill="#40c8d0" stroke="#003040"/><rect x="358" y="6" width="8" height="13" fill="#c0c0c0" stroke="#404040"/>
<rect x="373" y="3" width="15" height="15" fill="#fff" stroke="#108040" stroke-width="2"/><path d="M377 6l7 9M384 6l-7 9" stroke="#108040" stroke-width="2"/>
<path d="M396 10l10-6 2 14h-12z" fill="#208080"/><path d="M398 12h8M398 15h8M400 8v10M404 6v12" stroke="#c0e0e0"/>
<circle cx="420" cy="9" r="5" fill="#c0c8d8"/><circle cx="426" cy="13" r="5" fill="#90b0e0"/><circle cx="423" cy="16" r="3" fill="#a0a0a0"/>
<path d="M449 3l5 14h-10z" fill="#f08010"/><path d="M446 11h6" stroke="#fff" stroke-width="2"/>
<path d="M460 5l6-2 6 3-2 2-4-2-1 6h-2z" fill="#404040"/><rect x="467" y="8" width="11" height="10" fill="#fff" stroke="#303030"/><path d="M470 10v7M473 10v7" stroke="#a02080"/><rect x="462" y="12" width="4" height="7" fill="#e0d020"/>
<rect x="484" y="3" width="13" height="14" fill="#e0e0e0" stroke="#303030"/><circle cx="492" cy="11" r="5" fill="#60c0e0" stroke="#303060"/>
<rect x="508" y="3" width="15" height="15" fill="#802060" stroke="#300020"/><path d="M513 8l3 3 4-4" stroke="#f0c0e0" stroke-width="2" fill="none"/>
<path d="M533 5l5 4-3 4 9 2v4h-11z" fill="#207070"/><rect x="538" y="11" width="7" height="7" fill="#fff" stroke="#000"/>
<rect x="556" y="2" width="13" height="18" fill="#000"/><text x="558" y="16" font-family="Liberation Serif" font-weight="bold" font-size="15" fill="#fff">S</text>
<path d="M580 4l10 12M592 3l-8 12M578 14h14" stroke="#203060" stroke-width="2"/><path d="M590 5l4 2" stroke="#c0c020" stroke-width="2"/>
<rect x="602" y="3" width="16" height="15" fill="#f0f020"/><path d="M604 14q3-10 6-3t6-7" stroke="#d02020" fill="none" stroke-width="2"/><path d="M606 16q3-8 5-3" stroke="#2040c0" fill="none"/>
<rect x="624" y="3" width="16" height="15" fill="#f0f020"/><path d="M626 14q3-10 6-3t6-7" stroke="#d02020" fill="none" stroke-width="2"/><path d="M628 16q3-8 5-3" stroke="#2040c0" fill="none"/>
<rect x="648" y="3" width="16" height="15" fill="#f0f020"/><path d="M650 14q3-10 6-3t6-7" stroke="#d02020" fill="none" stroke-width="2"/><circle cx="661" cy="15" r="3" fill="#e02020"/>
<rect x="672" y="6" width="11" height="13" fill="#fff" stroke="#303030"/><text x="678" y="14" font-family="Liberation Sans" font-weight="bold" font-size="15" fill="#d0c020">?</text>
<rect x="695" y="3" width="15" height="15" fill="#101080"/><rect x="698" y="10" width="9" height="3" fill="#fff"/><rect x="698" y="14" width="9" height="2" fill="#e02020"/><rect x="699" y="3" width="7" height="5" fill="#505090"/>
<path d="M728 3l-9 15 4-8-2-1 9-6-4 7 2 1z" fill="#20c0d0" stroke="#107080" stroke-width=".5"/>
<rect x="741" y="3" width="14" height="15" fill="#fff" stroke="#404060"/><rect x="741" y="3" width="14" height="3" fill="#2040a0"/><circle cx="750" cy="14" r="4" fill="#30a040"/><path d="M746 17l8-7" stroke="#d03030" stroke-width="2"/>
<path d="M762 11l4-5 3 4 3-4 4 5-4 5-3-4-3 4z" fill="#e05020"/><path d="M762 11l4-5 2 3-3 5z" fill="#e8c020"/><path d="M772 6l4 5-4 5-2-3z" fill="#30a040"/>
<circle cx="793" cy="11" r="7.500" fill="#1030c0"/><text x="790" y="15" font-family="Liberation Sans" font-weight="bold" font-size="11" fill="#fff">?</text>
</svg>

<div class="tb" style="left:70px">DotNetClassLib_...</div>
<svg style="left:74px;top:747px" width="16" height="15"><path d="M1 7l4-5 3 4 3-4 4 5-4 5-3-4-3 4z" fill="#e05020"/><path d="M1 7l4-5 2 3-3 5z" fill="#e8c020"/><path d="M11 2l4 5-4 5-2-3z" fill="#30a040"/></svg>
<div class="tb" style="left:191px;padding-left:21px">АПОРТ: comclas...</div>
<svg style="left:195px;top:747px" width="16" height="15"><rect x="5" y="1" width="10" height="13" fill="#fff" stroke="#606060"/><circle cx="6" cy="8" r="5.500" fill="#2080e0"/></svg>
<div class="tb" style="left:312px">NET_вызов_COM</div>
<svg style="left:316px;top:748px" width="18" height="13"><path d="M1 12V3h5l1 2h8v7z" fill="#f0e080" stroke="#404000"/></svg>
<div class="tb" style="left:433px">Вызов NET-сбок...</div>
<svg style="left:437px;top:747px" width="16" height="16"><path d="M4 1h10l-3 11H1z" fill="#60c8d8" stroke="#205060"/><rect x="6" y="5" width="8" height="10" fill="#c0c0c0" stroke="#606060"/></svg>
<div class="tb" style="left:554px">Результаты пои...</div>
<svg style="left:558px;top:747px" width="16" height="16"><path d="M4 1h9v14H4z" fill="#fff" stroke="#808080"/><circle cx="7" cy="8" r="3.500" fill="#90d0f0" stroke="#2040a0"/><path d="M10 11l4 4" stroke="#2040a0" stroke-width="2"/></svg>
<div class="tb" style="left:675px">bin</div>
<svg style="left:679px;top:747px" width="16" height="16"><path d="M1 14V3h5l1 2h7v9z" fill="#f0e080" stroke="#404000"/><circle cx="8" cy="9" r="3.500" fill="#c0e0f0" stroke="#2040a0"/><path d="M10 12l3 3" stroke="#2040a0" stroke-width="2"/></svg>
<div class="tb" style="left:796px;background:#efede8;border-color:#404040 #fff #fff #404040;box-shadow:none;font-weight:bold;padding-left:21px">Командная ст...</div>
<svg style="left:800px;top:748px" width="15" height="13"><rect width="15" height="13" fill="#000"/><rect width="15" height="2" fill="#a0a0c0"/><text x="1" y="10" font-family="Liberation Mono" font-size="7" fill="#fff">C:\</text></svg>

<!-- tray -->
<div style="left:926px;top:718px;width:96px;height:48px;border:1px solid;border-color:#808080 #fff #fff #808080;box-sizing:border-box"></div>
<div class="t" style="left:959px;top:724px;font-size:12px">21:57</div>
<div style="left:930px;top:743px;width:16px;height:16px;background:#000080;color:#fff;font:11.500px/16px 'Liberation Sans',sans-serif;text-align:center">EN</div>
<svg style="left:948px;top:741px" width="72" height="20"><path d="M1 2h11v15H1z" fill="#e8e020" stroke="#303030"/><rect x="3" y="4" width="7" height="8" fill="#c0b010" stroke="#404040"/><rect x="17" y="8" width="8" height="7" fill="#808080" stroke="#202020"/><rect x="23" y="3" width="8" height="7" fill="#a0a0a0" stroke="#202020"/><path d="M18 16h10" stroke="#202020" stroke-width="2"/><circle cx="46" cy="10" r="7.500" fill="#e0e0e0" stroke="#303030"/><path d="M39 10a7 7 0 0 1 7-7l2 7-2 7a7 7 0 0 1-7-7z" fill="#303030"/><circle cx="47" cy="9" r="2" fill="#c03030"/><rect x="58" y="2" width="8" height="15" fill="#d0d0d0" stroke="#303030"/><circle cx="66" cy="12" r="5.500" fill="#fff" stroke="#303030"/><path d="M64 9l5 3-5 3z" fill="#20a020"/></svg>

</body></html>
